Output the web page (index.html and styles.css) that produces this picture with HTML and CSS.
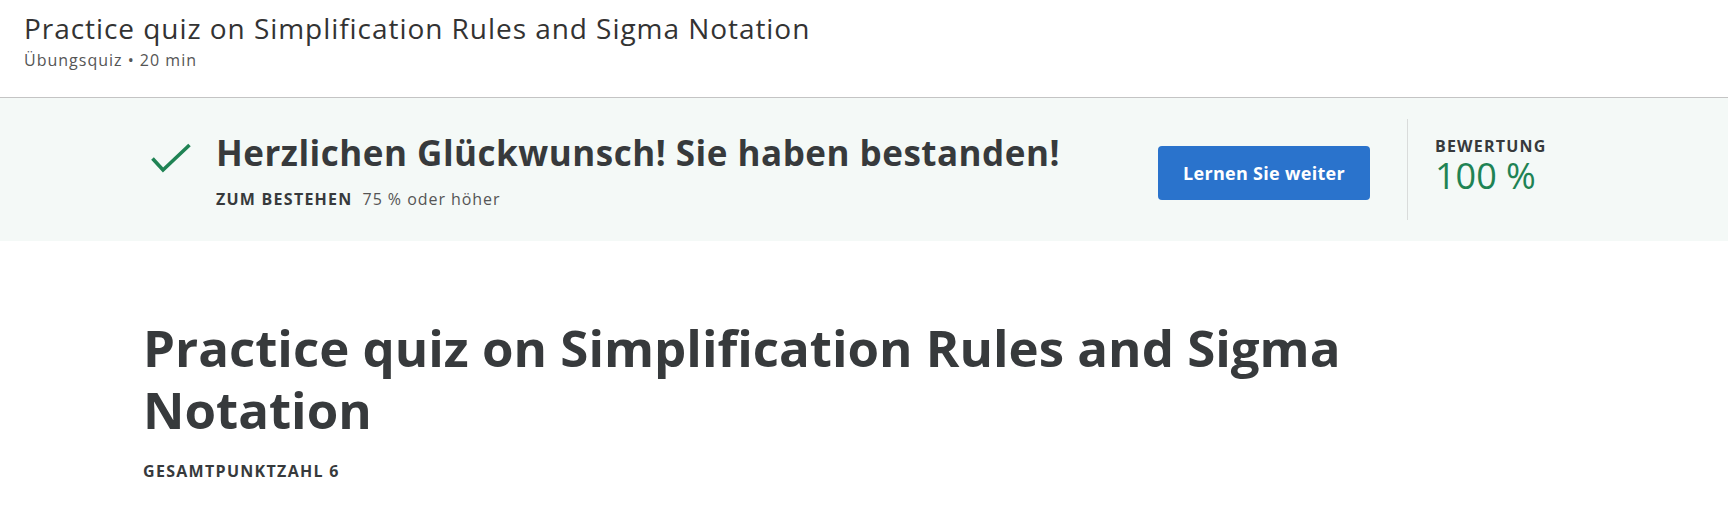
FILE: index.html
```html
<!DOCTYPE html>
<html lang="de">
<head>
<meta charset="utf-8">
<title>Practice quiz</title>
<link rel="stylesheet" href="styles.css">
</head>
<body>
<header class="top">
  <h1 class="top-title">Practice quiz on Simplification Rules and Sigma Notation</h1>
  <div class="top-sub">Übungsquiz • 20 min</div>
</header>
<section class="banner">
  <div class="result">
    <svg class="check" width="40" height="30" viewBox="0 0 40 30" aria-hidden="true">
      <path d="M1.5 15.5 L12 27 L38.5 2" fill="none" stroke="#1f8354" stroke-width="3.6"/>
    </svg>
    <div class="result-text">
      <div class="result-title">Herzlichen Glückwunsch! Sie haben bestanden!</div>
      <div class="result-sub"><span class="label">ZUM BESTEHEN</span><span class="req">75 % oder höher</span></div>
    </div>
  </div>
  <button class="btn">Lernen Sie weiter</button>
  <div class="score">
    <div class="score-label">BEWERTUNG</div>
    <div class="score-value">100 %</div>
  </div>
</section>
<main class="content">
  <h2 class="quiz-title">Practice quiz on Simplification Rules and Sigma Notation</h2>
  <div class="total">GESAMTPUNKTZAHL 6</div>
</main>
</body>
</html>
```
FILE: styles.css
```css
* { box-sizing: border-box; }
html, body { margin: 0; padding: 0; background: #fff; }
body {
  font-family: "Open Sans", "Noto Sans", sans-serif;
  color: #373a3c;
  width: 1728px;
  height: 510px;
  overflow: hidden;
}
.top {
  height: 98px;
  padding: 9px 0 0 24px;
  border-bottom: 1px solid #c4c4c4;
}
.top-title {
  margin: 0;
  font-size: 28px;
  font-weight: 400;
  line-height: 38px;
  letter-spacing: 0.95px;
  color: #333;
}
.top-sub {
  margin-top: 3px;
  font-size: 16px;
  line-height: 21px;
  letter-spacing: 1px;
  color: #555;
}
.banner {
  display: flex;
  align-items: center;
  height: 143px;
  padding: 21px 0 21px 151px;
  background: #f4f9f7;
}
.result {
  display: flex;
  align-items: flex-start;
  flex: 1;
  min-width: 0;
  align-self: flex-start;
}
.check {
  flex: 0 0 auto;
  margin-top: 24px;
  margin-right: 25px;
}
.result-text {
  margin-top: 11px;
}
.result-title {
  font-size: 35px;
  font-weight: 700;
  line-height: 46px;
  letter-spacing: 0.5px;
  color: #373a3c;
}
.result-sub {
  margin-top: 12px;
  font-size: 16px;
  line-height: 22px;
}
.result-sub .label {
  font-weight: 700;
  letter-spacing: 1.25px;
  margin-right: 10px;
}
.result-sub .req {
  color: #555;
  letter-spacing: 0.95px;
}
.btn {
  flex: 0 0 212px;
  height: 54px;
  margin-right: 37px;
  margin-top: 6px;
  padding: 0;
  border: 0;
  border-radius: 4px;
  background: #2a73cc;
  color: #fff;
  font-family: inherit;
  font-size: 18px;
  line-height: 24px;
  font-weight: 700;
  letter-spacing: 0.3px;
}
.score {
  flex: 0 0 321px;
  align-self: stretch;
  border-left: 1px solid #d9dcdb;
  padding: 17px 0 0 27px;
}
.score-label {
  font-size: 16px;
  font-weight: 700;
  letter-spacing: 1.2px;
  line-height: 20px;
}
.score-value {
  font-size: 36px;
  line-height: 40px;
  color: #1f8354;
}
.content {
  padding: 75px 0 0 143px;
}
.quiz-title {
  margin: 0;
  width: 1240px;
  font-size: 51px;
  font-weight: 700;
  line-height: 62px;
  color: #373a3c;
}
.total {
  margin-top: 20px;
  font-size: 16px;
  line-height: 22px;
  font-weight: 700;
  letter-spacing: 1.3px;
}
```
